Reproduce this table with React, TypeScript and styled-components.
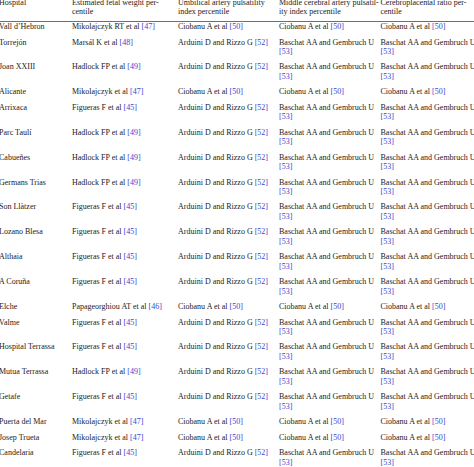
import React from "react";
import styled, { createGlobalStyle } from "styled-components";

const Global = createGlobalStyle`
  html, body { margin: 0; padding: 0; background: #fff; overflow: hidden; }
  body { font-family: "Liberation Serif", "Times New Roman", serif; }
`;

const Table = styled.div`
  margin: -2px 0 0 -1px;
  width: 482px;
  color: #1c1a1b;
  font-family: "Liberation Serif", "Times New Roman", serif;
  font-size: 8px;
  line-height: 9.4px;
`;

const Row = styled.div<{ $head?: boolean }>`
  display: grid;
  grid-template-columns: 73px 106px 101px 101.5px 100px;
  padding: ${(p) => (p.$head ? "0 0 3.9px" : "0.3px 0 5.8px")};
  border-bottom: ${(p) => (p.$head ? "1px solid #6f6f6f" : "none")};
`;

const Cell = styled.div`
  min-width: 0;
`;

const Ref = styled.span`
  color: #3a44cc;
`;

type Cite = [string, number];

const EFW: Record<string, Cite> = {
  mikRT: ["Mikolajczyk RT et al", 47],
  mik: ["Mikolajczyk et al", 47],
  mar: ["Marsál K et al", 48],
  had: ["Hadlock FP et al", 49],
  fig: ["Figueras F et al", 45],
  pap: ["Papageorghiou AT et al", 46],
};

const cio: Cite = ["Ciobanu A et al", 50];
const ard: Cite = ["Arduini D and Rizzo G", 52];
const bas: Cite = ["Baschat AA and Gembruch U", 53];

type RowData = { hospital: string; efw: Cite; ua: Cite; mca: Cite; cpr: Cite };

const A = (hospital: string, efw: Cite): RowData => ({ hospital, efw, ua: ard, mca: bas, cpr: bas });
const C = (hospital: string, efw: Cite): RowData => ({ hospital, efw, ua: cio, mca: cio, cpr: cio });

const rows: RowData[] = [
  C("Vall d’Hebron", EFW.mikRT),
  A("Torrejón", EFW.mar),
  A("Joan XXIII", EFW.had),
  C("Alicante", EFW.mik),
  A("Arrixaca", EFW.fig),
  A("Parc Taulí", EFW.had),
  A("Cabueñes", EFW.had),
  A("Germans Trias", EFW.had),
  A("Son Llàtzer", EFW.fig),
  A("Lozano Blesa", EFW.fig),
  A("Althaia", EFW.fig),
  A("A Coruña", EFW.fig),
  C("Elche", EFW.pap),
  A("Valme", EFW.fig),
  A("Hospital Terrassa", EFW.fig),
  A("Mutua Terrassa", EFW.had),
  A("Getafe", EFW.fig),
  C("Puerta del Mar", EFW.mik),
  C("Josep Trueta", EFW.mik),
  A("Candelaria", EFW.fig),
];

const CiteCell: React.FC<{ c: Cite }> = ({ c }) => (
  <Cell>
    {c[0]} <Ref>[{c[1]}]</Ref>
  </Cell>
);

export default function App() {
  return (
    <>
      <Global />
      <Table>
        <Row $head>
          <Cell>Hospital</Cell>
          <Cell>
            Estimated fetal weight per-
            <br />
            centile
          </Cell>
          <Cell>
            Umbilical artery pulsatility
            <br />
            index percentile
          </Cell>
          <Cell>
            Middle cerebral artery pulsatil-
            <br />
            ity index percentile
          </Cell>
          <Cell>
            Cerebroplacental ratio per-
            <br />
            centile
          </Cell>
        </Row>
        {rows.map((r) => (
          <Row key={r.hospital}>
            <Cell>{r.hospital}</Cell>
            <CiteCell c={r.efw} />
            <CiteCell c={r.ua} />
            <CiteCell c={r.mca} />
            <CiteCell c={r.cpr} />
          </Row>
        ))}
      </Table>
    </>
  );
}
